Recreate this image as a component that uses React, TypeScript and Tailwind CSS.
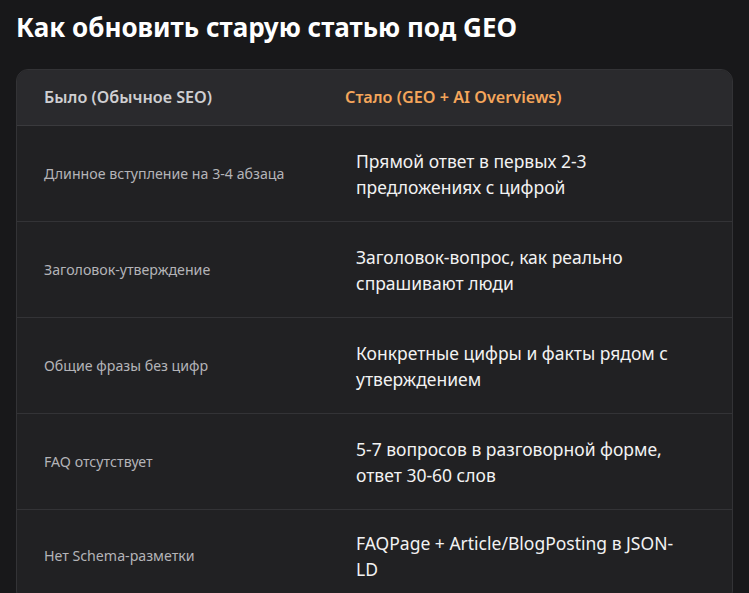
const rows: [string, string][] = [
  ["Длинное вступление на 3-4 абзаца", "Прямой ответ в первых 2-3 предложениях с цифрой"],
  ["Заголовок-утверждение", "Заголовок-вопрос, как реально спрашивают люди"],
  ["Общие фразы без цифр", "Конкретные цифры и факты рядом с утверждением"],
  ["FAQ отсутствует", "5-7 вопросов в разговорной форме, ответ 30-60 слов"],
  ["Нет Schema-разметки", "FAQPage + Article/BlogPosting в JSON-LD"],
]

export default function App() {
  return (
    <div className="min-h-[593px] bg-[#18181a] px-[16px] pt-[9px] pb-[14px] font-['Noto_Sans',sans-serif]">
      <h1 className="text-[26px] font-bold text-white leading-[36px]">Как обновить старую статью под GEO</h1>
      <div className="mt-[24px] rounded-[12px] border border-[#333336] bg-[#212123] overflow-hidden">
        <div className="grid grid-cols-[301px_1fr] bg-[#2a2a2d] border-b border-[#3a3a3d] h-[56px] items-center">
          <div className="pl-[27px] text-[16.2px] font-semibold text-[#cfcfd2]">Было (Обычное SEO)</div>
          <div className="pl-[27px] text-[16.2px] font-semibold text-[#f5a65b]">Стало (GEO + AI Overviews)</div>
        </div>
        {rows.map(([a, b], i) => (
          <div
            key={i}
            className={`grid grid-cols-[301px_1fr] items-center ${i < rows.length - 1 ? "border-b border-[#333336] min-h-[96px]" : "min-h-[68px]"}`}
          >
            <div className="pl-[27px] text-[14.2px] text-[#b4b4b8]">{a}</div>
            <div className="pl-[38px] pr-[40px] py-[20px] text-[17.5px] leading-[26px] text-[#f2f2f2]">{b}</div>
          </div>
        ))}
      </div>
    </div>
  )
}
